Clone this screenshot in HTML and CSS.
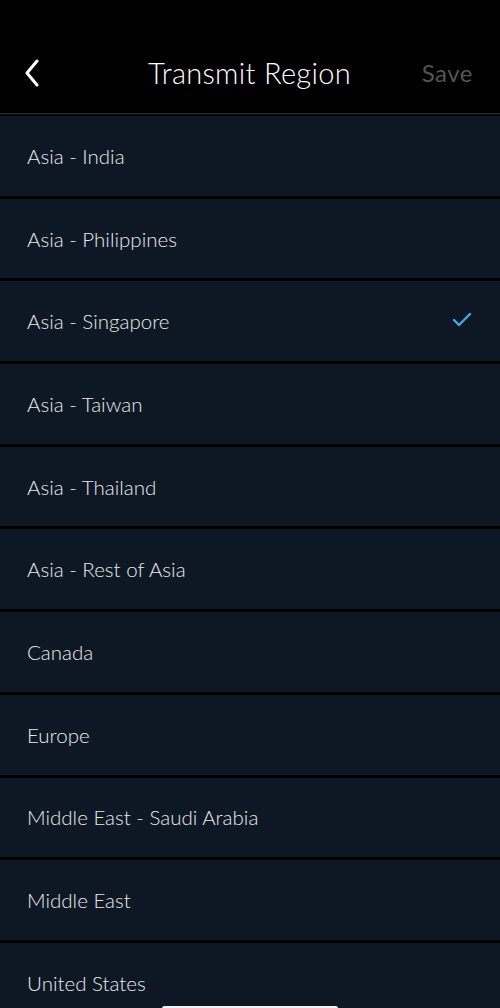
FILE: index.html
```html
<!DOCTYPE html>
<html lang="en">
<head>
    <meta charset="UTF-8">
    <meta name="viewport" content="width=device-width, initial-scale=1.0">
    <title>Transmit Region</title>
    <link rel="stylesheet" href="styles.css">
</head>
<body>
    <div class="screen">
        <div class="header">
            <div class="back">
                <svg width="16" height="28" viewBox="0 0 16 28">
                    <path d="M13 2 L3 14 L13 26" fill="none" stroke="#fff" stroke-width="3" stroke-linecap="round" stroke-linejoin="round"/>
                </svg>
            </div>
            <div class="title">Transmit Region</div>
            <div class="save">Save</div>
        </div>
        <div class="divider"></div>
        <div class="list">
            <div class="row">Asia - India</div>
            <div class="row">Asia - Philippines</div>
            <div class="row selected">
                <span>Asia - Singapore</span>
                <svg class="check" width="20" height="16" viewBox="0 0 20 16">
                    <path d="M2 8 L7 13 L18 2" fill="none" stroke="#45a8ec" stroke-width="2.4" stroke-linecap="round" stroke-linejoin="round"/>
                </svg>
            </div>
            <div class="row">Asia - Taiwan</div>
            <div class="row">Asia - Thailand</div>
            <div class="row">Asia - Rest of Asia</div>
            <div class="row">Canada</div>
            <div class="row">Europe</div>
            <div class="row">Middle East - Saudi Arabia</div>
            <div class="row">Middle East</div>
            <div class="row">United States</div>
        </div>
        <div class="home-bar"></div>
    </div>
</body>
</html>
```

FILE: styles.css
```css
body {
    margin: 0;
    background-color: #000;
    font-family: Lato, "Open Sans", sans-serif;
    color: #fff;
}
.screen {
    width: 500px;
    height: 1008px;
    overflow: hidden;
    position: relative;
    background-color: #000;
}
.header {
    height: 113px;
    display: flex;
    align-items: center;
    padding-top: 32px;
    box-sizing: border-box;
    padding-left: 24px;
    padding-right: 27px;
}
.back {
    width: 40px;
    display: flex;
    align-items: center;
}
.title {
    flex: 1;
    text-align: center;
    font-size: 29px;
    font-weight: 300;
    letter-spacing: 0.3px;
    padding-left: 18px;
}
.save {
    font-size: 24px;
    color: #555;
    width: 56px;
    text-align: right;
    letter-spacing: 0.5px;
}
.divider {
    height: 1px;
    background-color: #2a2f36;
    border-bottom: 2px solid #05090e;
}
.list {
    display: flex;
    flex-direction: column;
}
.row {
    height: 79.7px;
    background-color: #0e1824;
    border-bottom: 3px solid #000;
    display: flex;
    align-items: center;
    justify-content: space-between;
    padding: 0 28px 0 27px;
    font-size: 20.5px;
    font-weight: 300;
    color: #e8eaec;
    flex-shrink: 0;
}
.check {
    margin-top: -2px;
}
.home-bar {
    position: absolute;
    left: 162px;
    bottom: -3px;
    width: 176px;
    height: 5px;
    border-radius: 3px;
    background-color: #f2f2f2;
}
```
